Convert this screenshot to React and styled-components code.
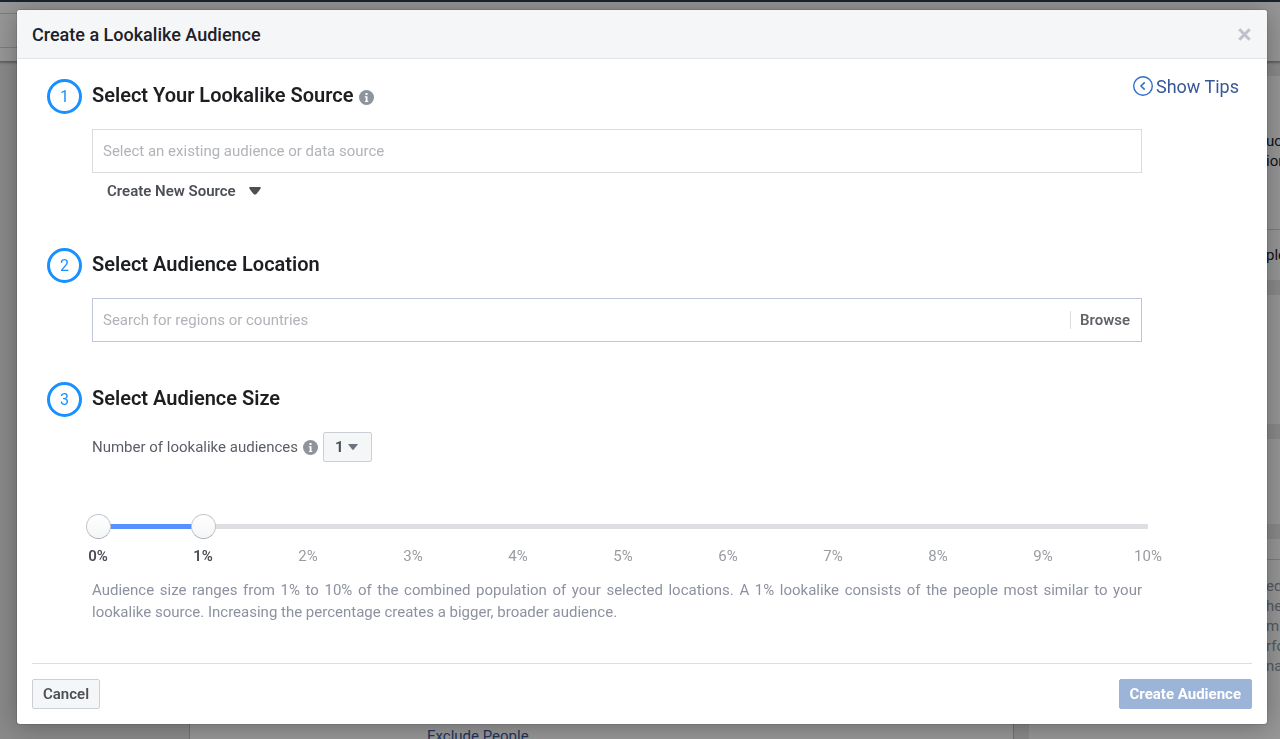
import React, { useState } from 'react';
import styled, { createGlobalStyle } from 'styled-components';

const GlobalStyle = createGlobalStyle`
  * {
    box-sizing: border-box;
  }

  body {
    margin: 0;
    font-family: Roboto, "Liberation Sans", sans-serif;
    font-size: 15px;
    color: #1d2129;
  }

  button,
  input,
  select {
    font-family: inherit;
    font-size: 15px;
    margin: 0;
  }
`;

/* page behind the dialog */

const Page = styled.div`
  height: 100vh;
  display: flex;
  flex-direction: column;
  overflow: hidden;
  background: #e4e4e5;
`;

const TopBar = styled.div`
  flex: none;
  height: 2px;
  background: #2c3a4f;
`;

const Toolbar = styled.div`
  flex: none;
  height: 60px;
  padding-top: 11px;
  background: #fafafa;
  border-bottom: 1px solid #a0a3a8;
  box-shadow: 0 1px 2px rgba(0, 0, 0, 0.3);
`;

const ToolbarField = styled.div`
  width: 600px;
  height: 35px;
  border: 1px solid #ccd0d5;
  border-left: 0;
`;

const Columns = styled.div`
  flex: 1;
  display: flex;
  min-height: 0;
`;

const Sidebar = styled.div`
  flex: 0 0 189px;
`;

const Main = styled.div`
  flex: 1;
  display: flex;
  align-items: flex-end;
  padding-left: 237px;
  background: #fafafa;
  border: solid #b8bbc0;
  border-width: 0 1px;
`;

const PageLink = styled.a`
  color: #365899;
  font-size: 15px;
  line-height: 12px;
  height: 9px;
  white-space: nowrap;
  text-decoration: none;
`;

const Aside = styled.aside`
  flex: 0 0 251px;
  min-width: 0;
  display: flex;
  flex-direction: column;
  gap: 15px;
  margin-left: 15px;
  padding-top: 14px;
`;

const Panel = styled.section`
  flex: ${(p) => (p.$height ? 'none' : '1')};
  height: ${(p) => (p.$height ? `${p.$height}px` : 'auto')};
  background: #fafafa;
`;

const PanelText = styled.p`
  margin: 0;
  padding: ${(p) => p.$top}px 0 0 237px;
  color: ${(p) => (p.$muted ? '#90949c' : '#1d2129')};
  line-height: 20px;
  white-space: pre;
  overflow: hidden;
`;

const PanelRule = styled.hr`
  margin: ${(p) => p.$top}px 0 0;
  border: 0;
  border-top: 1px solid #ccd0d5;
`;

/* dialog */

const Overlay = styled.div`
  position: fixed;
  inset: 0;
  padding: 10px 13px 15px 17px;
  background: rgba(0, 0, 0, 0.4);
  overflow: hidden;
`;

const Dialog = styled.div`
  background: #fff;
  border-radius: 3px;
  box-shadow: 0 2px 26px rgba(0, 0, 0, 0.3), 0 0 0 1px rgba(0, 0, 0, 0.1);
`;

const DialogHeader = styled.header`
  display: flex;
  align-items: center;
  justify-content: space-between;
  height: 49px;
  padding: 0 15px;
  background: #f5f6f7;
  border-bottom: 1px solid #e2e4e8;
  border-radius: 3px 3px 0 0;
`;

const DialogTitle = styled.h1`
  margin: 0;
  font-size: 18px;
  font-weight: 500;
`;

const CloseButton = styled.button`
  display: flex;
  padding: 1px;
  border: 0;
  background: none;
  color: #bec2c9;
  cursor: pointer;
`;

const DialogBody = styled.div`
  display: flex;
  flex-direction: column;
  gap: 40px;
  padding: 20px 28px 40px 30px;
`;

const StepRow = styled.section`
  display: flex;
  gap: 10px;
`;

const StepNumber = styled.span`
  flex: none;
  display: flex;
  align-items: center;
  justify-content: center;
  width: 35px;
  height: 35px;
  border: 3px solid #1890ff;
  border-radius: 50%;
  color: #1890ff;
  font-size: 16px;
`;

const StepContent = styled.div`
  flex: 1;
  min-width: 0;
`;

const StepHeader = styled.div`
  display: flex;
  justify-content: space-between;
  height: 50px;
`;

const StepTitle = styled.h2`
  display: flex;
  align-items: center;
  gap: 6px;
  height: 31px;
  margin: 0;
  color: #1c1e21;
  font-size: 20px;
  font-weight: 600;

  svg {
    margin-top: 6px;
  }
`;

const StepBody = styled.div`
  margin-right: 97px;
`;

const TipsButton = styled.button`
  display: flex;
  align-items: center;
  gap: 3px;
  height: 14px;
  padding: 0;
  border: 0;
  background: none;
  color: #385898;
  font-size: 18px;
  cursor: pointer;
`;

const Field = styled.div`
  display: flex;
  align-items: center;
  height: 44px;
  border: 1px solid ${(p) => (p.$strong ? '#bdc7d8' : '#dadcde')};
`;

const FieldInput = styled.input`
  flex: 1;
  min-width: 0;
  height: 42px;
  padding: 0 10px;
  border: 0;
  outline: 0;
  background: none;
  color: #1d2129;

  &::placeholder {
    color: #b0b3b8;
    opacity: 1;
  }
`;

const BrowseButton = styled.button`
  height: 18px;
  padding: 0 11px 0 9px;
  border: 0;
  border-left: 1px solid #dadcde;
  background: none;
  color: #606468;
  font-weight: 600;
  line-height: 16px;
  cursor: pointer;
`;

const NewSourceButton = styled.button`
  display: flex;
  align-items: center;
  gap: 13px;
  height: 35px;
  padding: 0 15px;
  border: 0;
  background: none;
  color: #4b4f56;
  font-weight: 600;
  cursor: pointer;
`;

const CountRow = styled.div`
  display: flex;
  align-items: center;
  gap: 5px;
  margin-bottom: 52px;
  color: #5a5e66;
`;

const SelectBox = styled.div`
  display: grid;
  align-items: center;

  > * {
    grid-area: 1 / 1;
  }

  svg {
    justify-self: end;
    margin-right: 14px;
    pointer-events: none;
  }
`;

const CountSelect = styled.select`
  appearance: none;
  width: 49px;
  height: 30px;
  padding: 0 11px;
  border: 1px solid #ccd0d5;
  border-radius: 2px;
  background: #f5f6f7;
  color: #4b4f56;
  font-weight: 700;
`;

const Slider = styled.div`
  display: grid;
  align-items: center;
  height: 25px;
  margin: 0 -19px 7px -6px;

  > * {
    grid-area: 1 / 1;
  }
`;

const Track = styled.div`
  height: 5px;
  margin: 0 13px;
  background: #dddfe2;
`;

const TrackFill = styled.div`
  height: 5px;
  background: #5890ff;
`;

const Thumb = styled.input`
  appearance: none;
  width: 100%;
  height: 25px;
  background: none;
  pointer-events: none;

  &::-webkit-slider-thumb {
    appearance: none;
    width: 25px;
    height: 25px;
    border: 1px solid #c4c6ca;
    border-bottom-color: #a8abb0;
    border-radius: 50%;
    background: linear-gradient(#fff, #f4f5f6);
    pointer-events: auto;
    cursor: pointer;
  }
`;

const Scale = styled.div`
  display: flex;
  justify-content: space-between;
  margin: 0 -26px 13px -14px;
`;

const Tick = styled.span`
  width: 40px;
  color: ${(p) => (p.$active ? '#4b4f56' : '#999ca1')};
  font-weight: ${(p) => (p.$active ? 600 : 400)};
  line-height: 20px;
  text-align: center;
`;

const Hint = styled.p`
  margin: 0;
  color: #8d92a0;
  line-height: 22px;
  text-align: justify;
`;

const DialogFooter = styled.footer`
  display: flex;
  justify-content: space-between;
  margin: 0 15px;
  padding: 15px 0;
  border-top: 1px solid #dadde1;
`;

const FooterButton = styled.button`
  height: 30px;
  padding: 0 10px;
  border: 1px solid ${(p) => (p.$primary ? '#9cb4d8' : '#ccd0d5')};
  border-radius: 2px;
  background: ${(p) => (p.$primary ? '#9cb4d8' : '#f5f6f7')};
  color: ${(p) => (p.$primary ? '#fff' : '#4b4f56')};
  font-weight: ${(p) => (p.$primary ? 700 : 600)};
  cursor: pointer;
`;

const InfoIcon = () => (
  <svg width="15" height="15" viewBox="0 0 15 15" aria-hidden="true">
    <circle cx="7.5" cy="7.5" r="7.5" fill="#8d949e" />
    <rect x="6.5" y="3" width="2" height="2" fill="#fff" />
    <path d="M5.7 6.2h2.800v4.800h.8v1h-3.400v-1h.8V7.200h-1z" fill="#fff" />
  </svg>
);

const CloseIcon = () => (
  <svg width="13" height="13" viewBox="0 0 13 13" aria-hidden="true">
    <path d="M1.3 1.3l10.4 10.4M11.7 1.3L1.3 11.7" stroke="currentColor" strokeWidth="3" />
  </svg>
);

const TipsIcon = () => (
  <svg width="20" height="20" viewBox="0 0 20 20" fill="none" aria-hidden="true">
    <circle cx="10" cy="10" r="9.3" stroke="#2f6ecb" strokeWidth="1.4" />
    <path d="M11.7 6.4L8 10l3.7 3.6" stroke="#2f6ecb" strokeWidth="1.5" />
  </svg>
);

const SourceCaret = () => (
  <svg width="12" height="8" viewBox="0 0 12 8" aria-hidden="true">
    <path d="M1 0h10c.8 0 1 .9.6 1.6-.6 1.2-2.6 3.600-4.200 5.400-.7.8-2.100.8-2.800 0C3 5.200 1 2.800.4 1.600 0 .9.2 0 1 0z" fill="#4b4f56" />
  </svg>
);

const SelectCaret = () => (
  <svg width="10" height="6" viewBox="0 0 10 6" aria-hidden="true">
    <path d="M0 0h10L5.8 5.400c-.5.6-1.100.6-1.600 0z" fill="#6b7280" />
  </svg>
);

const Step = ({ number, title, info, action, children }) => (
  <StepRow>
    <StepNumber>{number}</StepNumber>
    <StepContent>
      <StepHeader>
        <StepTitle>
          {title}
          {info && <InfoIcon />}
        </StepTitle>
        {action}
      </StepHeader>
      <StepBody>{children}</StepBody>
    </StepContent>
  </StepRow>
);

const SizeSlider = () => {
  const [range, setRange] = useState([0, 1]);
  const [from, to] = range;
  const ticks = Array.from({ length: 11 }, (_, i) => i);

  return (
    <>
      <Slider>
        <Track>
          <TrackFill style={{ marginLeft: `${from * 10}%`, width: `${(to - from) * 10}%` }} />
        </Track>
        <Thumb
          type="range"
          min="0"
          max="10"
          aria-label="Smallest audience size"
          value={from}
          onChange={(e) => setRange([Math.min(Number(e.target.value), to), to])}
        />
        <Thumb
          type="range"
          min="0"
          max="10"
          aria-label="Largest audience size"
          value={to}
          onChange={(e) => setRange([from, Math.max(Number(e.target.value), from)])}
        />
      </Slider>
      <Scale>
        {ticks.map((tick) => (
          <Tick key={tick} $active={tick === from || tick === to}>
            {tick}%
          </Tick>
        ))}
      </Scale>
    </>
  );
};

const Background = () => (
  <Page>
    <TopBar />
    <Toolbar>
      <ToolbarField />
    </Toolbar>
    <Columns>
      <Sidebar />
      <Main>
        <PageLink href="#exclude">Exclude People</PageLink>
      </Main>
      <Aside>
        <Panel $height={204}>
          <PanelText $top={55}>{'uct\nion'}</PanelText>
          <PanelRule $top={58} />
          <PanelText $top={15}>ple</PanelText>
        </Panel>
        <Panel $height={129} />
        <Panel $height={85} />
        <Panel>
          <PanelRule $top={20} />
          <PanelText $top={16} $muted>{'ed\nhe\nmb\nrfo\nnat'}</PanelText>
        </Panel>
      </Aside>
    </Columns>
  </Page>
);

const App = () => {
  const [count, setCount] = useState('1');

  return (
    <>
      <GlobalStyle />
      <Background />
      <Overlay>
        <Dialog role="dialog" aria-labelledby="dialog-title">
          <DialogHeader>
            <DialogTitle id="dialog-title">Create a Lookalike Audience</DialogTitle>
            <CloseButton aria-label="Close">
              <CloseIcon />
            </CloseButton>
          </DialogHeader>
          <DialogBody>
            <Step
              number={1}
              title="Select Your Lookalike Source"
              info
              action={
                <TipsButton>
                  <TipsIcon />
                  Show Tips
                </TipsButton>
              }
            >
              <Field>
                <FieldInput aria-label="Lookalike source" placeholder="Select an existing audience or data source" />
              </Field>
              <NewSourceButton>
                Create New Source
                <SourceCaret />
              </NewSourceButton>
            </Step>
            <Step number={2} title="Select Audience Location">
              <Field $strong>
                <FieldInput aria-label="Audience location" placeholder="Search for regions or countries" />
                <BrowseButton>Browse</BrowseButton>
              </Field>
            </Step>
            <Step number={3} title="Select Audience Size">
              <CountRow>
                <label htmlFor="count">Number of lookalike audiences</label>
                <InfoIcon />
                <SelectBox>
                  <CountSelect id="count" value={count} onChange={(e) => setCount(e.target.value)}>
                    {['1', '2', '3', '4', '5', '6'].map((n) => (
                      <option key={n}>{n}</option>
                    ))}
                  </CountSelect>
                  <SelectCaret />
                </SelectBox>
              </CountRow>
              <SizeSlider />
              <Hint>
                Audience size ranges from 1% to 10% of the combined population of your selected locations. A 1%
                lookalike consists of the people most similar to your lookalike source. Increasing the percentage
                creates a bigger, broader audience.
              </Hint>
            </Step>
          </DialogBody>
          <DialogFooter>
            <FooterButton>Cancel</FooterButton>
            <FooterButton $primary>Create Audience</FooterButton>
          </DialogFooter>
        </Dialog>
      </Overlay>
    </>
  );
};

export default App;
